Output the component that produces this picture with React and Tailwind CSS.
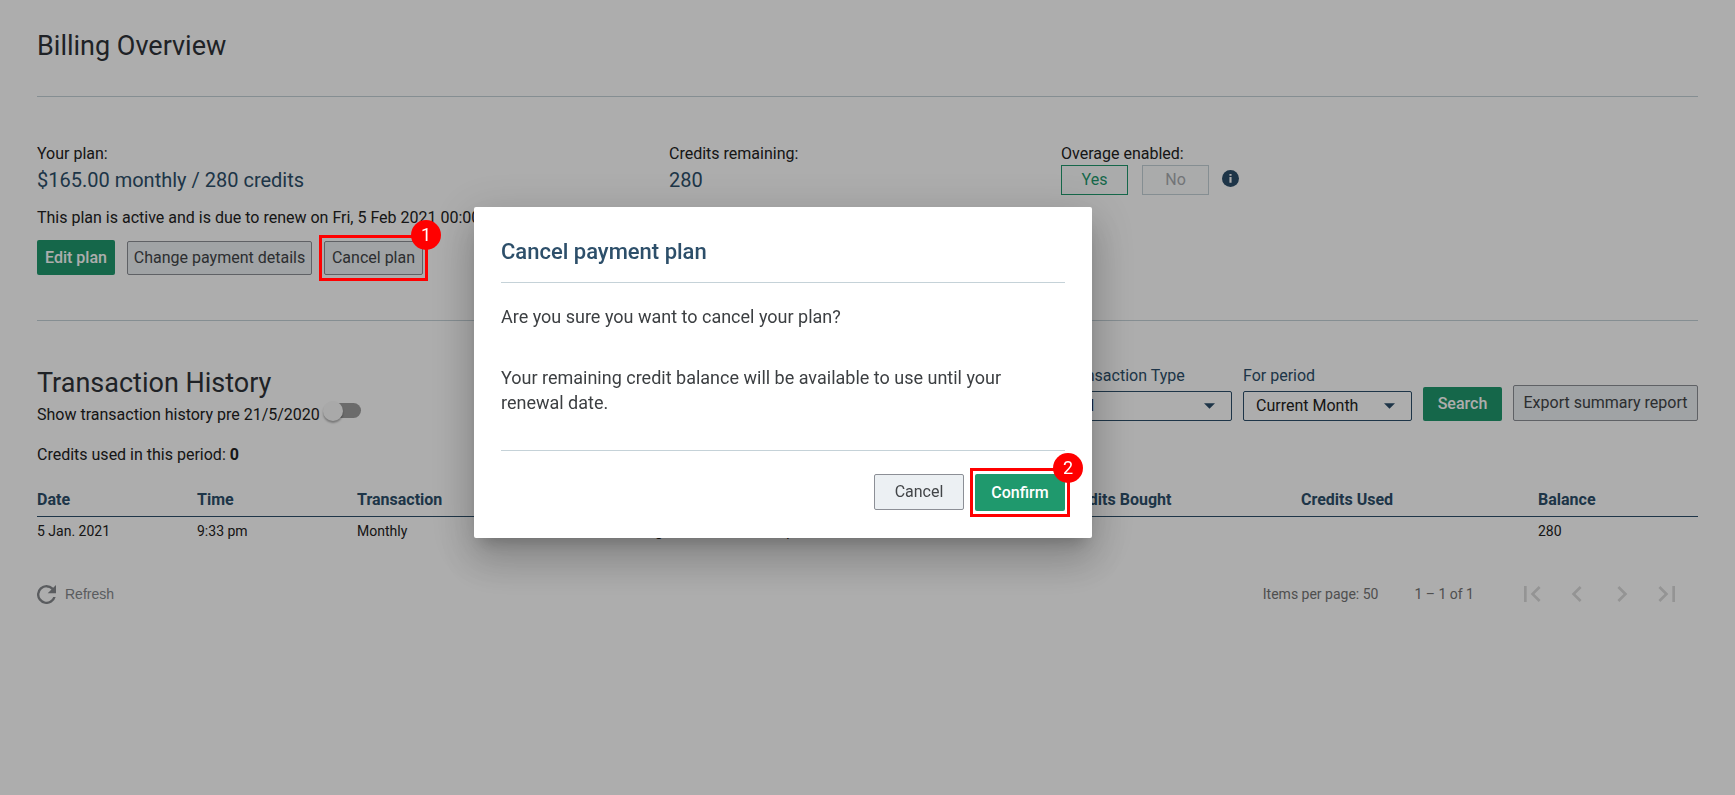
import React from "react";

function Callout({ number }) {
  return (
    <span aria-hidden="true" className="pointer-events-none absolute -inset-x-[5px] -inset-y-[6px] z-30 border-[3px] border-[#ff0000]">
      <span className="absolute -top-[18px] -right-[16px] flex size-[30px] items-center justify-center rounded-full bg-[#ff0000] text-[18px] text-white">
        {number}
      </span>
    </span>
  );
}

const primary = "rounded-[2px] bg-[#1f996d] font-medium text-white";
const secondary = "rounded-[2px] border border-[#8c8f96] bg-[#ecf0f3] text-[#424548]";

function SelectField({ id, label, options }) {
  return (
    <div className="flex w-[169px] flex-col gap-[5px]">
      <label htmlFor={id} className="text-[16px] leading-[20px] text-[#2d4f6a]">{label}</label>
      <div className="relative">
        <select id={id} className="h-[30px] w-full appearance-none rounded-[2px] border border-[#2d4f6a] bg-white px-[12px] text-[16px] text-[#222]">
          {options.map((o) => (
            <option key={o}>{o}</option>
          ))}
        </select>
        <svg viewBox="0 0 10 5" className="pointer-events-none absolute top-[12px] right-[17px] h-[6px] w-[11px] fill-[#2d4f6a]">
          <path d="M0 0h10L5 5z" />
        </svg>
      </div>
    </div>
  );
}

const pagerIcons = [
  ["First page", "M18.41 16.59L13.82 12l4.59-4.59L17 6l-6 6 6 6zM6 6h2v12H6z"],
  ["Previous page", "M15.41 7.41L14 6l-6 6 6 6 1.41-1.41L10.83 12z"],
  ["Next page", "M10 6L8.59 7.41 13.17 12l-4.58 4.59L10 18l6-6z"],
  ["Last page", "M5.59 7.41L10.18 12l-4.59 4.59L7 18l6-6-6-6zM16 6h2v12h-2z"],
];

export default function App() {
  return (
    <div className="min-h-screen bg-white font-[Roboto,sans-serif] text-[16px] leading-[20px] text-[#222]">
      <main className="px-[37px] pt-[28px]">
        <h1 className="text-[27px] leading-[36px] text-[#2f3338]">Billing Overview</h1>
        <hr className="mt-[32px] border-[#c5d2d8]" />

        <section className="mt-[47px] grid grid-cols-[632fr_392fr_637fr]">
          <div>
            <p>Your plan:</p>
            <p className="mt-[3px] text-[20px] leading-[26px] text-[#2d4f6a]">$165.00 monthly / 280 credits</p>
            <p className="mt-[15px]">This plan is active and is due to renew on Fri, 5 Feb 2021 00:00</p>
            <div className="mt-[12px] flex items-end gap-[12px]">
              <button className={`h-[35px] w-[78px] ${primary}`}>Edit plan</button>
              <button className={`h-[34px] w-[185px] ${secondary}`}>Change payment details</button>
              <div className="relative">
                <button className={`block h-[34px] w-[99px] ${secondary}`}>Cancel plan</button>
                <Callout number="1" />
              </div>
            </div>
          </div>
          <div>
            <p>Credits remaining:</p>
            <p className="mt-[3px] text-[20px] leading-[26px] text-[#2d4f6a]">280</p>
          </div>
          <div>
            <p>Overage enabled:</p>
            <div className="mt-px flex items-center">
              <button className="h-[30px] w-[67px] border border-[#1f996d] bg-[#fbfcfd] text-[#1f996d]">Yes</button>
              <button className="ml-[14px] h-[30px] w-[67px] border border-[#c5d2d8] bg-[#fbfcfd] text-[#a9acb0]">No</button>
              <svg viewBox="0 0 16 16" className="mb-[4px] ml-[13px] size-[17px]" role="img" aria-label="About overage">
                <circle cx="8" cy="8" r="8" fill="#2d4f6a" />
                <path d="M7 3.8h2v1.7H7zM7 6.7h2v5.2H7z" fill="#fff" />
              </svg>
            </div>
          </div>
        </section>

        <hr className="mt-[45px] border-[#c5d2d8]" />

        <section className="mt-[44px]">
          <div className="flex justify-between">
            <div>
              <h2 className="text-[27px] leading-[36px] text-[#2f3338]">Transaction History</h2>
              <label className="mt-[4px] flex h-[20px] items-end gap-[3px]">
                Show transaction history pre 21/5/2020
                <span className="relative flex h-[24px] w-[38px] items-start">
                  <input type="checkbox" role="switch" className="mt-[2px] ml-[2px] h-[15px] w-[36px] appearance-none rounded-full bg-[#9e9e9e]" />
                  <span className="pointer-events-none absolute top-0 left-0 size-[20px] rounded-full bg-[#fafafa] shadow-[0_2px_2px_rgba(0,0,0,0.3)]" />
                </span>
              </label>
              <p className="mt-[20px]">
                Credits used in this period: <b>0</b>
              </p>
            </div>
            <div className="mb-[44px] flex items-end gap-[11px]">
              <SelectField id="type" label="Transaction Type" options={["All"]} />
              <SelectField id="period" label="For period" options={["Current Month"]} />
              <button className={`h-[34px] w-[79px] ${primary}`}>Search</button>
              <button className={`h-[36px] w-[185px] ${secondary}`}>Export summary report</button>
            </div>
          </div>

          <table className="mt-[25px] w-full table-fixed border-collapse text-left">
            <colgroup>
              <col className="w-[160px]" />
              <col className="w-[160px]" />
              <col className="w-[235px]" />
              <col />
              <col className="w-[237px]" />
              <col className="w-[237px]" />
              <col className="w-[160px]" />
            </colgroup>
            <thead className="text-[16px] leading-[20px] text-[#2d4f6a]">
              <tr className="border-b border-[#2d4f6a]">
                {["Date", "Time", "Transaction", "Description", "Credits Bought", "Credits Used", "Balance"].map((h) => (
                  <th key={h} className="p-0 pb-[6px] font-bold">{h}</th>
                ))}
              </tr>
            </thead>
            <tbody className="text-[14px] leading-[18px]">
              <tr>
                {["5 Jan. 2021", "9:33 pm", "Monthly", "Credit usage for current month plan", "", "", "280"].map((c, i) => (
                  <td key={i} className="p-0 pt-[5px]">{c}</td>
                ))}
              </tr>
            </tbody>
          </table>

          <footer className="mt-[34px] flex h-[40px] items-center justify-between text-[14px] text-[#757575]">
            <button className="flex items-center gap-[9px] font-[Arial,'Liberation_Sans',sans-serif] text-[#85888c]">
              <svg viewBox="4 4 16 16" className="size-[19px] fill-[#85888c]">
                <path d="M17.65 6.35A7.96 7.96 0 0 0 12 4a8 8 0 1 0 7.73 10h-2.08A6 6 0 1 1 12 6c1.66 0 3.14.69 4.22 1.78L13 11h7V4z" />
              </svg>
              Refresh
            </button>
            <div className="flex items-center pr-[9px]">
              <span>Items per page: 50</span>
              <span className="mr-[35px] ml-[36px]">1 – 1 of 1</span>
              {pagerIcons.map(([label, d]) => (
                <button key={label} aria-label={label} disabled className="flex size-[45px] items-center justify-center">
                  <svg viewBox="0 0 24 24" className="size-[32px] fill-[#dadada]">
                    <path d={d} />
                  </svg>
                </button>
              ))}
            </div>
          </footer>
        </section>
      </main>

      <div className="fixed inset-0 z-10 flex items-start justify-center bg-black/32 pt-[207px] pr-[169px]">
        <div role="dialog" aria-modal="true" aria-labelledby="dialog-title" className="w-[618px] rounded-[2px] bg-white px-[27px] pt-[31px] pb-[27px] text-[#3c3f42] shadow-[0_11px_15px_-7px_rgba(0,0,0,0.2),0_24px_38px_3px_rgba(0,0,0,0.14),0_9px_46px_8px_rgba(0,0,0,0.12)]">
          <h2 id="dialog-title" className="text-[22px] leading-[28px] font-medium text-[#2d4f6a]">Cancel payment plan</h2>
          <hr className="mt-[16px] border-[#c5d2d8]" />
          <div className="mt-[21px] text-[18px] leading-[25px]">
            <p>Are you sure you want to cancel your plan?</p>
            <p className="mt-[36px]">Your remaining credit balance will be available to use until your renewal date.</p>
          </div>
          <hr className="mt-[35px] border-[#c5d2d8]" />
          <div className="mt-[23px] flex items-start justify-end gap-[11px]">
            <button className={`h-[36px] w-[90px] ${secondary}`}>Cancel</button>
            <div className="relative">
              <button className={`block h-[37px] w-[90px] ${primary}`}>Confirm</button>
              <Callout number="2" />
            </div>
          </div>
        </div>
      </div>
    </div>
  );
}
